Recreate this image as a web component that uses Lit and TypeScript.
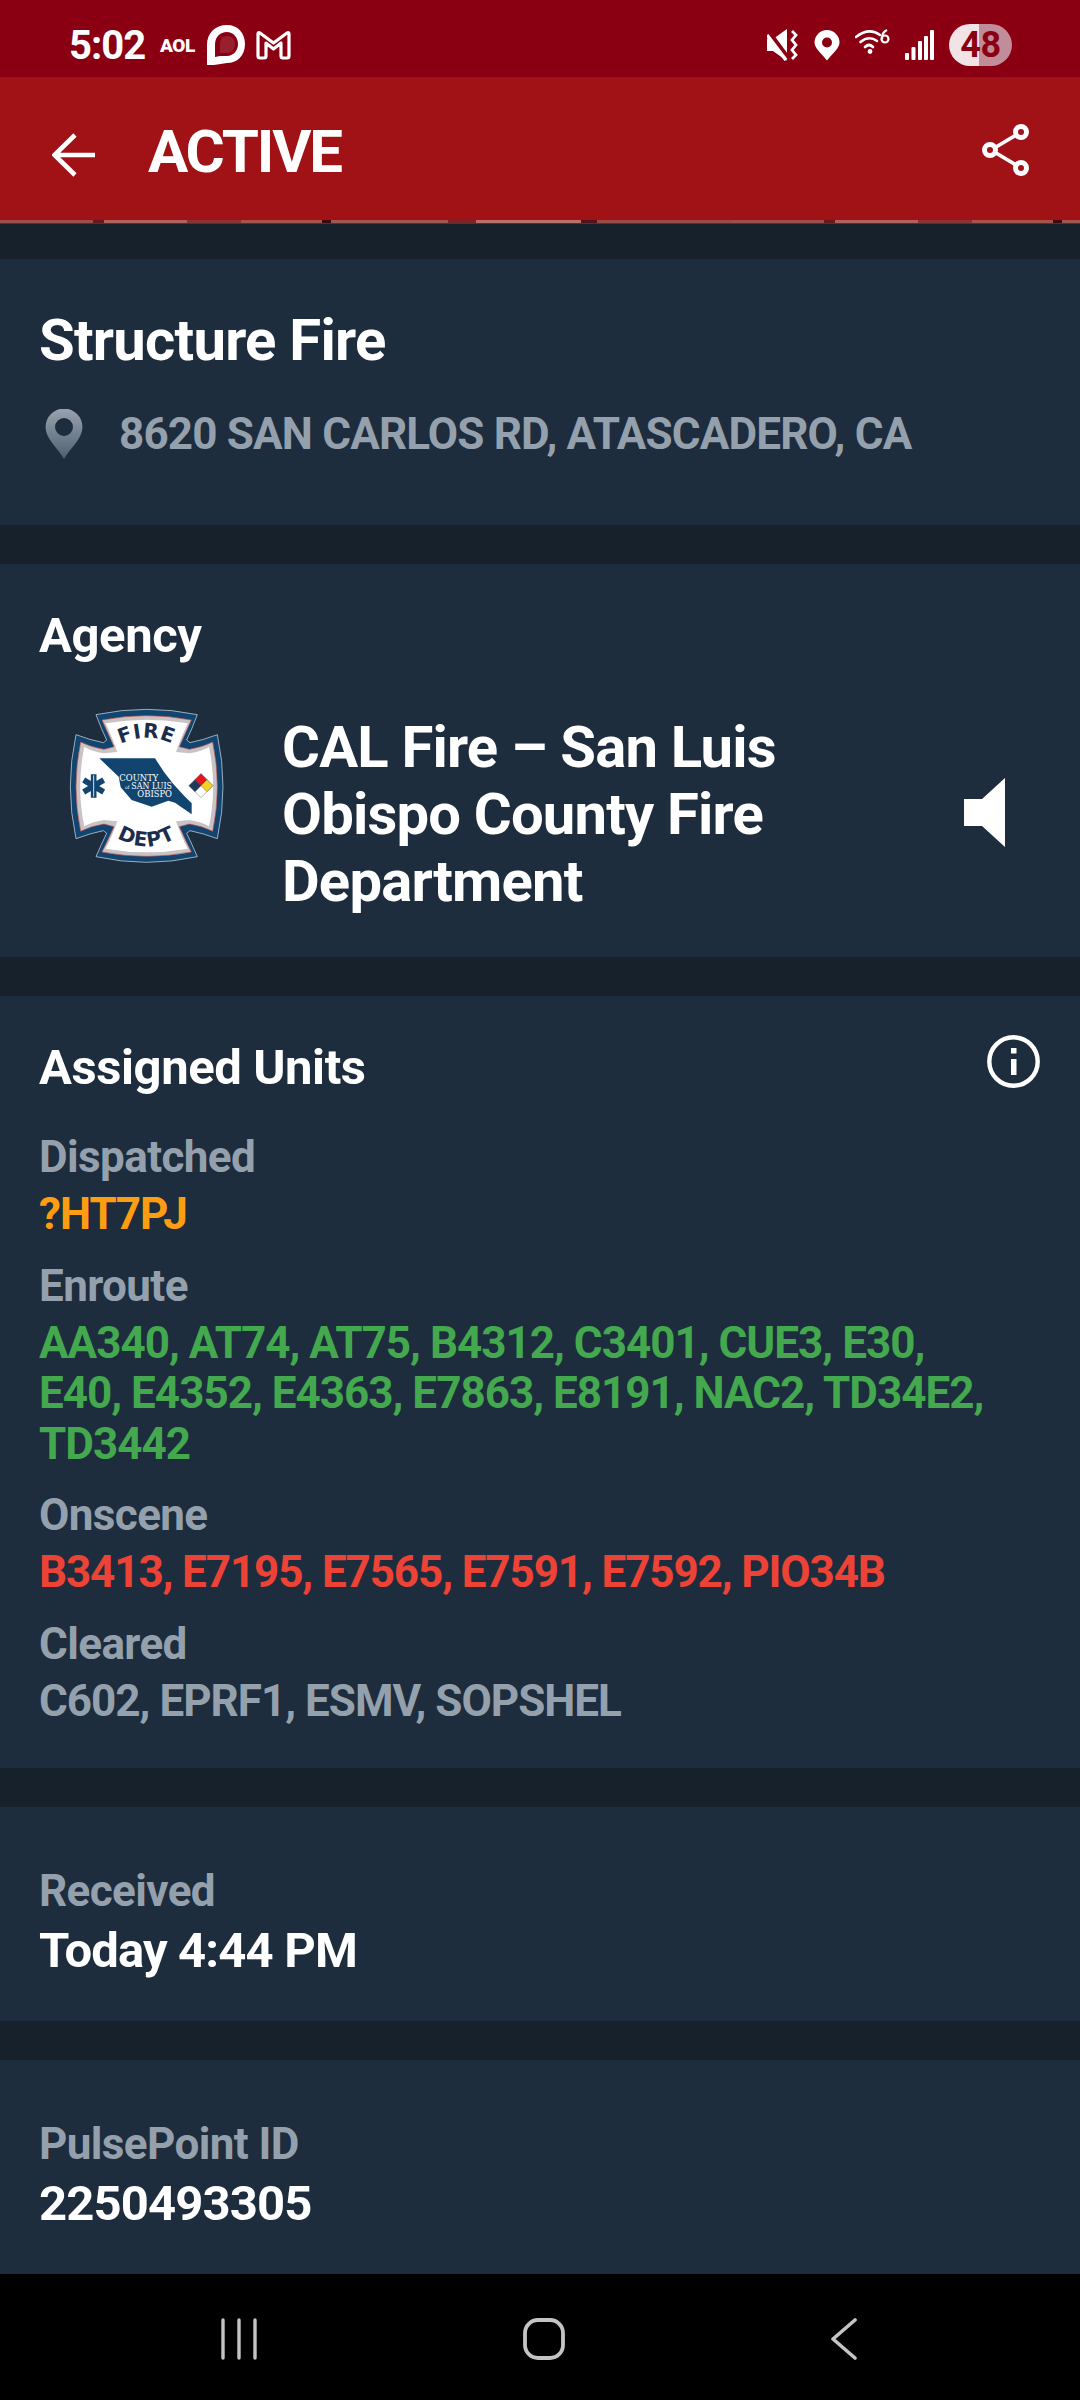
import { LitElement, html, css, svg } from "lit";
import { customElement } from "lit/decorators.js";

const logo = svg`<svg class="logo" viewBox="0 0 660 600" width="220" height="200">
  <path d="M168 104Q320 72 472 104Q455 150 440 180L450 188Q490 180 532 164Q566 320 532 476Q490 460 450 452L440 460Q455 490 472 530Q320 564 168 530Q185 490 200 460L190 452Q150 460 108 476Q74 320 108 164Q150 180 190 188L200 180Q185 150 168 104Z" fill="#11456f" stroke="#dfe5ea" stroke-width="2"/>
  <path d="M186 120Q320 94 454 120Q436 160 418 200L448 208Q486 202 518 186Q546 320 518 454Q486 438 448 432L418 440Q436 480 454 516Q320 542 186 516Q204 480 222 440L192 432Q154 438 122 454Q94 320 122 186Q154 202 192 208L222 200Q204 160 186 120Z" fill="#c9c3c6" stroke="#b9504b" stroke-width="2"/>
  <path d="M197 130Q320 108 443 130Q424 170 408 216L448 220Q486 214 507 201Q532 320 507 439Q486 426 448 420L408 424Q424 470 443 506Q320 528 197 506Q216 470 232 424L192 420Q154 426 133 439Q108 320 133 201Q154 214 192 220L232 216Q216 170 197 130Z" fill="#fff"/>
  <defs><path id="a1" d="M226 200Q320 146 414 200"/><path id="a2" d="M226 470Q320 528 414 470"/></defs>
  <text class="lt"><textPath href="#a1" startOffset="50%" text-anchor="middle">FIRE</textPath></text>
  <text class="lt"><textPath href="#a2" startOffset="50%" text-anchor="middle">DEPT</textPath></text>
  <path d="M178 235L345 235L372 276L400 312L430 345L455 370L455 403L405 368L385 362L335 380L275 360L242 322L236 290Z" fill="#11456f"/>
  <text class="co" x="238" y="303" textLength="117" lengthAdjust="spacingAndGlyphs">COUNTY</text>
  <text class="co of" x="255" y="326">of</text>
  <text class="co" x="274" y="328" textLength="122" lengthAdjust="spacingAndGlyphs">SAN LUIS</text>
  <text class="co" x="292" y="352" textLength="104" lengthAdjust="spacingAndGlyphs">OBISPO</text>
  <g stroke="#11456f" stroke-width="17">
    <path d="M161 283V353M131 300L191 336M131 336L191 300"/>
  </g>
  <path d="M161 286V350" stroke="#fff" stroke-width="2.5"/>
  <g stroke="#223" stroke-width="1">
    <path d="M483 281L519 317L483 353L447 317Z" fill="#fff"/>
    <path d="M483 281L501 299L483 317L465 299Z" fill="#e8141c"/>
    <path d="M501 299L519 317L501 335L483 317Z" fill="#f6d21e"/>
    <path d="M465 299L483 317L465 335L447 317Z" fill="#1d3a58"/>
  </g>
</svg>`;

@customElement("app-root")
export class AppRoot extends LitElement {
  static styles = css`
    :host { display: block; width: 1080px; height: 2400px; background: #16212c; font-family: Roboto, "Liberation Sans", sans-serif; overflow: hidden; letter-spacing: -0.416px; }
    .page { display: flex; flex-direction: column; height: 2400px; }
    .status { height: 77px; background: #8a0012; display: flex; align-items: center; padding: 13px 68px 0 69px; color: #fff; flex: none; box-sizing: border-box; }
    .time { font-size: 40px; font-weight: 700; width: 91px; letter-spacing: -1px; }
    .aol { font-size: 19px; font-weight: 900; width: 46px; letter-spacing: -0.4px; }
    .spacer { flex: 1; }
    .status svg { display: block; flex: none; }
    .ml1 { margin-right: 9px; }
    .battery { width: 63px; height: 42px; border-radius: 21px; margin-left: 15px; background: linear-gradient(90deg, #f2e4e6 0 48%, #c08d98 48% 100%); color: #8a0012; font-size: 36px; font-weight: 700; text-align: center; line-height: 43px; }
    .toolbar { height: 142px; background: #a01216; display: flex; align-items: center; flex: none; padding: 0 50px 0 52px; color: #fff; box-sizing: border-box; }
    .back { margin-top: 14px; }
    .share { margin-top: 4px; }
    .toolbar h1 { margin: 8px 0 0 52px; font-size: 60px; line-height: 60px; font-weight: 700; flex: 1; letter-spacing: -2.2px; }
    .edge { height: 5px; flex: none; background:
      repeating-linear-gradient(90deg, #9c4f4a 0 93px, #6a181d 93px 104px, #b0635c 104px 187px, #8a3534 187px 241px, #a8524c 241px 322px, #3c0a10 322px 331px, #a25650 331px 448px, #7a2427 448px 476px, #ba6f68 476px 581px, #55121a 581px 597px, #9a4a46 597px 731px) center / 100% 3px no-repeat, #8a1a1e; }
    .card { background: #1d2d3e; margin-top: 35px; padding: 0 40px 0 39px; flex: none; box-sizing: border-box; position: relative; }
    .card + .card { margin-top: 39px; }
    .c1 { height: 266px; padding-top: 48px; }
    .c1 h2 { margin: 0; font-size: 58px; line-height: 66px; font-weight: 700; color: #fff; letter-spacing: -0.75px; }
    .addr { display: flex; align-items: center; margin-top: 35px; font-size: 44px; line-height: 52px; font-weight: 700; color: #95a0ad; letter-spacing: -0.82px; }
    .addr svg { margin: 0 36px 0 6px; }
    .c2 { height: 393px; padding-top: 44px; }
    h3 { margin: 0; font-size: 49px; line-height: 56px; font-weight: 700; color: #fff; }
    .agency { display: flex; align-items: flex-start; margin-top: 16px; }
    .logo { flex: none; margin-left: 1px; display: block; }
    .agency-name { flex: 1; font-size: 58px; line-height: 67px; font-weight: 700; color: #fff; margin-left: 22px; margin-top: 34px; letter-spacing: -0.82px; }
    .speaker { margin-right: 35px; margin-top: 97px; flex: none; }
    .lt { font: 800 60px "DejaVu Sans", sans-serif; fill: #1b2d4c; letter-spacing: 3px; }
    .co { font: 400 25px "DejaVu Serif", serif; fill: #fff; letter-spacing: 0; }
    .of { font-size: 14px; }
    .c3 { height: 772px; padding-top: 44px; }
    .head { display: flex; justify-content: space-between; align-items: flex-start; }
    .head svg { margin-top: -5px; }
    .label { font-size: 44px; line-height: 52px; font-weight: 700; color: #95a0ad; letter-spacing: -0.6px; }
    .units { font-size: 44px; line-height: 50.5px; font-weight: 700; margin-top: 6px; margin-bottom: 20px; letter-spacing: -0.98px; }
    .lab1 { margin-top: 35px; }
    .orange { color: #ff9d12; }
    .green { color: #43a84e; }
    .red { color: #ed4337; letter-spacing: -1.1px; }
    .grey { color: #95a0ad; }
    .c4 { height: 214px; padding-top: 58px; }
    .value { font-size: 49px; line-height: 58px; font-weight: 700; color: #fff; margin-top: 5px; letter-spacing: -0.85px; }
    .nav { margin-top: auto; height: 126px; background: #000; flex: none; display: flex; justify-content: space-between; align-items: center; padding: 4px 223px 0 221px; box-sizing: border-box; }
  `;

  render() {
    return html`<div class="page">
      <div class="status">
        <div class="time">5:02</div>
        <div class="aol">AOL</div>
        <svg class="ml1" width="40" height="42" viewBox="0 0 40 42"><path d="M1 41V21C1 9 9 1 21 1C32 1 39 9 39 20C39 32 31 39 21 39L8 41Z" fill="#fff"/><path d="M9 33V21C9 13 14 8 21 8C27 8 32 13 32 20C32 27 27 32 21 32H14Z" fill="#8a0012"/><path d="M14 29V21C14 15 17 12 21 12C26 12 29 16 29 20C29 25 25 29 21 29Z" fill="#fff" fill-opacity="0.12"/></svg>
        <svg width="37" height="30" viewBox="0 0 37 30"><path d="M3 4V26Q3 28 5 28H9Q11 28 11 26V13L18.5 19L26 13V26Q26 28 28 28H32Q34 28 34 26V4Q34 2 32 3L18.5 13L5 3Q3 2 3 4Z" fill="none" stroke="#fff" stroke-width="3.2" stroke-linejoin="round"/></svg>
        <div class="spacer"></div>
        <svg width="31" height="32" viewBox="0 0 31 32" style="margin-right:16px"><path d="M0 10H6L20 0V32L6 22H0Z" fill="#fff"/><path d="M0 1L23 32" stroke="#8a0012" stroke-width="5"/><path d="M0 6L19 31" stroke="#fff" stroke-width="3.5"/><path d="M25 2L29 6L25 11L29 16L25 21L29 26L25 30" fill="none" stroke="#fff" stroke-width="2.8"/></svg>
        <svg width="26" height="31" viewBox="0 0 26 31" style="margin-right:15px"><path fill-rule="evenodd" d="M13 30.5C7 23 .5 18 .5 12.5A12.5 12.5 0 0 1 25.5 12.5C25.5 18 19 23 13 30.5ZM13 7.5A5 5 0 1 0 13 17.5A5 5 0 1 0 13 7.5Z" fill="#fff"/></svg>
        <svg width="35" height="26" viewBox="0 0 35 26" style="margin-right:15px;margin-bottom:8px"><g fill="none" stroke="#fff" stroke-width="2.6" stroke-linecap="round"><path d="M1 9Q14 -1 25 7"/><path d="M5.5 14Q14 7 22 13"/><path d="M10 19Q14 15 18 19"/></g><circle cx="15" cy="23.5" r="2.4" fill="#fff"/><circle cx="30" cy="11" r="3.5" fill="none" stroke="#fff" stroke-width="2.2"/><path d="M27 11Q27 4 32 2" fill="none" stroke="#fff" stroke-width="2.2"/></svg>
        <svg width="29" height="30" viewBox="0 0 29 30"><g fill="#fff"><rect x="0" y="23" width="4" height="7" rx="1"/><rect x="6.5" y="17" width="4" height="13" rx="1"/><rect x="13" y="11" width="4" height="19" rx="1"/><rect x="19" y="6" width="4" height="24" rx="1"/><rect x="25" y="0" width="4" height="30" rx="1"/></g></svg>
        <div class="battery">48</div>
      </div>
      <div class="toolbar">
        <svg class="back" width="44" height="44" viewBox="0 0 44 44"><path d="M43 22H3M23 2L2.5 22L23 42" fill="none" stroke="#fff" stroke-width="4.6"/></svg>
        <h1>ACTIVE</h1>
        <svg class="share" width="48" height="54" viewBox="0 0 48 54"><path d="M39 9L9 27L39 45" fill="none" stroke="#fff" stroke-width="3.6"/><g fill="#a01216" stroke="#fff" stroke-width="5"><circle cx="39" cy="9" r="5.5"/><circle cx="8" cy="27" r="5.5"/><circle cx="39" cy="45" r="5.5"/></g></svg>
      </div>
      <div class="edge"></div>

      <section class="card c1">
        <h2>Structure Fire</h2>
        <div class="addr">
          <svg width="38" height="50" viewBox="0 0 38 50"><defs><linearGradient id="pg" x1="0" y1="0" x2="0" y2="1"><stop offset="0" stop-color="#9aa3ae"/><stop offset="1" stop-color="#4c6072"/></linearGradient></defs><path fill-rule="evenodd" d="M19 50C13 39 .5 30 .5 18A18.5 18.5 0 0 1 37.5 18C37.5 30 25 39 19 50ZM19 9A9 9 0 1 0 19 27A9 9 0 1 0 19 9Z" fill="url(#pg)"/></svg>
          <span>8620 SAN CARLOS RD, ATASCADERO, CA</span>
        </div>
      </section>

      <section class="card c2">
        <h3>Agency</h3>
        <div class="agency">
          ${logo}
          <div class="agency-name">CAL Fire – San Luis<br />Obispo County Fire<br />Department</div>
          <svg class="speaker" width="41" height="71" viewBox="0 0 41 71"><path d="M0 22H18L41 1V70L18 49H0Z" fill="#fff"/></svg>
        </div>
      </section>

      <section class="card c3">
        <div class="head">
          <h3>Assigned Units</h3>
          <svg width="53" height="53" viewBox="0 0 53 53"><circle cx="26.5" cy="26.5" r="24.2" fill="none" stroke="#fff" stroke-width="4.4"/><path d="M24 24H29.5V40H24ZM24 13H29.5V18.5H24Z" fill="#fff"/></svg>
        </div>
        <div class="label lab1">Dispatched</div>
        <div class="units orange">?HT7PJ</div>
        <div class="label">Enroute</div>
        <div class="units green">AA340, AT74, AT75, B4312, C3401, CUE3, E30,<br />E40, E4352, E4363, E7863, E8191, NAC2, TD34E2,<br />TD3442</div>
        <div class="label">Onscene</div>
        <div class="units red">B3413, E7195, E7565, E7591, E7592, PIO34B</div>
        <div class="label">Cleared</div>
        <div class="units grey">C602, EPRF1, ESMV, SOPSHEL</div>
      </section>

      <section class="card c4">
        <div class="label">Received</div>
        <div class="value">Today 4:44 PM</div>
      </section>
      <section class="card c4">
        <div class="label">PulsePoint ID</div>
        <div class="value">2250493305</div>
      </section>

      <nav class="nav">
        <svg width="36" height="42" viewBox="0 0 36 42"><path d="M2 2V40M18 2V40M34 2V40" stroke="#c4c4c4" stroke-width="3.4" stroke-linecap="round"/></svg>
        <svg width="42" height="42" viewBox="0 0 42 42"><rect x="2" y="2" width="38" height="38" rx="13" fill="none" stroke="#c4c4c4" stroke-width="3.8"/></svg>
        <svg width="26" height="42" viewBox="0 0 26 42"><path d="M24 2L2 21L24 40" fill="none" stroke="#c4c4c4" stroke-width="3.6" stroke-linecap="round" stroke-linejoin="round"/></svg>
      </nav>
    </div>`;
  }
}
